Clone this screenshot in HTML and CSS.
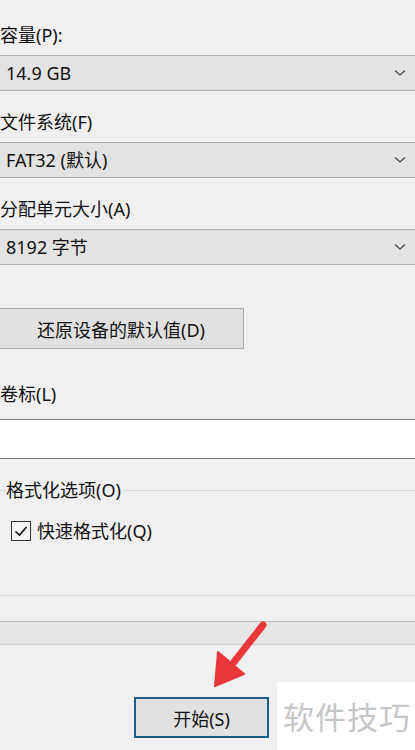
FILE: index.html
```html
<!DOCTYPE html>
<html lang="zh-CN">
<head>
<meta charset="utf-8">
<title>格式化</title>
<link rel="stylesheet" href="styles.css">
</head>
<body>
<div class="dialog">
  <div class="field first">
    <div class="label">容量(P):</div>
    <div class="combo"><span>14.9 GB</span><svg class="chev" width="12" height="8" viewBox="0 0 12 8"><path d="M1 1.5 L6 6 L11 1.5" fill="none" stroke="#444" stroke-width="1.2"/></svg></div>
  </div>
  <div class="field">
    <div class="label">文件系统(F)</div>
    <div class="combo"><span>FAT32 (默认)</span><svg class="chev" width="12" height="8" viewBox="0 0 12 8"><path d="M1 1.5 L6 6 L11 1.5" fill="none" stroke="#444" stroke-width="1.2"/></svg></div>
  </div>
  <div class="field">
    <div class="label">分配单元大小(A)</div>
    <div class="combo"><span>8192 字节</span><svg class="chev" width="12" height="8" viewBox="0 0 12 8"><path d="M1 1.5 L6 6 L11 1.5" fill="none" stroke="#444" stroke-width="1.2"/></svg></div>
  </div>
  <div class="btn restore">还原设备的默认值(D)</div>
  <div class="label vol">卷标(L)</div>
  <div class="textbox"></div>
  <div class="group">
    <div class="group-head"><span class="seg"></span><span class="gtitle">格式化选项(O)</span><span class="gline"></span></div>
    <div class="check-row">
      <span class="checkbox"><svg width="16" height="16" viewBox="0 0 16 16"><path d="M2.5 8.5 L6.5 12 L13.5 4" fill="none" stroke="#111" stroke-width="1.6"/></svg></span>
      <span class="check-label">快速格式化(Q)</span>
    </div>
  </div>
  <div class="progress"></div>
  <div class="btn start">开始(S)</div>
  <svg class="arrow" width="75" height="85" viewBox="0 0 75 85">
    <g fill="#e8383a" stroke="#e8383a" stroke-linejoin="round">
      <line x1="63" y1="15" x2="34" y2="52" stroke-width="7" stroke-linecap="round"/>
      <polygon points="15,76 18,42 44,64" stroke-width="2"/>
    </g>
  </svg>
  <div class="watermark">软件技巧</div>
</div>
</body>
</html>
```
FILE: styles.css
```css
html, body {
  margin: 0;
  padding: 0;
}
body {
  background: #f0f0f0;
  font-family: "Noto Sans", "Noto Sans CJK SC", sans-serif;
  font-size: 18px;
  color: #111111;
}
.dialog {
  position: relative;
  width: 415px;
  height: 750px;
  overflow: hidden;
  background: #f0f0f0;
}
.label {
  height: 24px;
  line-height: 24px;
  white-space: nowrap;
}
.field {
  margin-top: 19px;
}
.field.first {
  padding-top: 4px;
}
.combo {
  margin-top: 8px;
  margin-left: -2px;
  margin-right: -2px;
  height: 34px;
  border: 1px solid #adadad;
  background: #e3e3e3;
  display: flex;
  align-items: center;
  justify-content: space-between;
  padding-left: 7px;
  padding-right: 6px;
}
.combo span {
  line-height: 24px;
}
.chev {
  display: block;
  margin-right: 4px;
}
.btn {
  display: flex;
  align-items: center;
  justify-content: center;
  background: #e1e1e1;
  white-space: nowrap;
}
.restore {
  margin-top: 43px;
  margin-left: -2px;
  width: 244px;
  height: 39px;
  border: 1px solid #adadad;
}
.vol {
  margin-top: 33px;
}
.textbox {
  margin-top: 13px;
  margin-left: -1px;
  margin-right: -2px;
  height: 38px;
  background: #ffffff;
  border: 1px solid #7a7a7a;
}
.group {
  margin-top: 19px;
  height: 117px;
  border-bottom: 1px solid #d8d8d8;
}
.group-head {
  display: flex;
  align-items: center;
  height: 24px;
}
.seg {
  width: 5px;
  border-top: 1px solid #d8d8d8;
}
.gtitle {
  padding: 0 2px 0 1px;
  line-height: 24px;
}
.gline {
  flex: 1;
  border-top: 1px solid #d8d8d8;
}
.check-row {
  margin-top: 19px;
  margin-left: 11px;
  display: flex;
  align-items: center;
  height: 20px;
}
.checkbox {
  width: 18px;
  height: 18px;
  border: 1px solid #333;
  background: #f4f4f4;
  display: flex;
  align-items: center;
  justify-content: center;
}
.check-label {
  margin-left: 6px;
  line-height: 24px;
}
.progress {
  margin-top: 25px;
  height: 22px;
  background: #e6e6e6;
  border-top: 1px solid #bcbcbc;
  border-bottom: 1px solid #d0d0d0;
}
.start {
  margin-top: 52px;
  margin-left: 134px;
  width: 131px;
  height: 37px;
  border: 2px solid #1c5d8a;
}
.arrow {
  position: absolute;
  left: 200px;
  top: 610px;
}
.watermark {
  position: absolute;
  right: 0;
  bottom: 0;
  width: 138px;
  height: 68px;
  background: #ffffff;
  color: #c6c6c6;
  font-family: "Noto Sans CJK SC", sans-serif;
  font-size: 31px;
  line-height: 68px;
  padding-left: 6px;
  box-sizing: border-box;
  letter-spacing: 1px;
  white-space: nowrap;
}
```
